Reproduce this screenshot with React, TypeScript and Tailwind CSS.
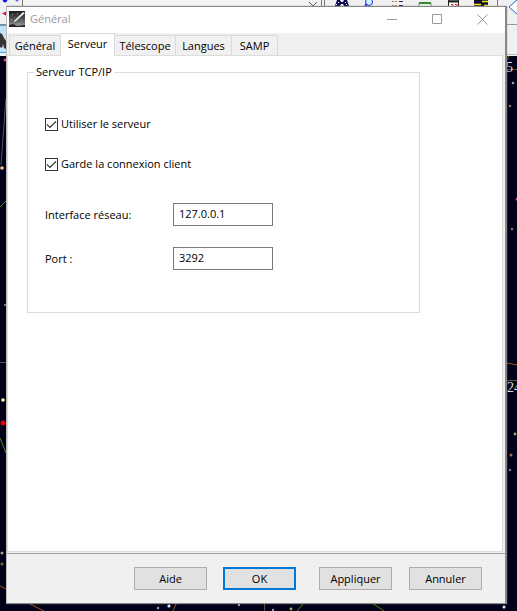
import { useState } from "react";
import type { ReactNode } from "react";

const tabs = ["Général", "Serveur", "Télescope", "Langues", "SAMP"];
const tabWidths = ["w-[52px]", "w-[54px]", "w-[61px]", "w-14", "w-[46px]"];

function Backdrop() {
  return (
    <svg
      aria-hidden="true"
      className="absolute inset-0 h-full w-full"
      viewBox="0 0 517 611"
      preserveAspectRatio="none"
    >
      <rect width="517" height="611" fill="#00001a" />
      <rect width="517" height="56" fill="#f0f0f0" />
      <rect x="23" width="301" height="6" fill="#f4f4f4" />
      <path d="M22.5 0V6" stroke="#777" />
      <circle cx="5" cy="0" r="2.4" fill="#1018ff" />
      <circle cx="17" cy="0" r="1.5" fill="#5060ff" />
      <path d="M2 13.5l4-2v4z" fill="#e80838" />
      <path d="M0 24.5H6" stroke="#888" />
      <rect y="25" width="6" height="28" fill="#c4e2f7" />
      <path d="M0 25.5H6M0 52.5H6" stroke="#4aa0e0" />
      <path d="M0 33l2 1 2 4 2 3v8l-2-1-1-4-1 4-2-1z" fill="#333" />
      <path d="M309 2l4 4 4-4" stroke="#555" fill="none" />
      <path d="M321.500 0V6M324.500 0V6M497.500 0V6" stroke="#777" />
      <path d="M337 0h3l1 2h2l1-2h3l2 6h-5l-1-2h-2l-1 2h-5z" fill="#080850" />
      <path d="M338 2.500h1M336 4.500h1M345 2.500h1M346 4.500h1" stroke="#fff" />
      <circle cx="369" cy="2" r="3.5" fill="#c8f8ff" stroke="#2424e0" />
      <path d="M365 6l2-2" stroke="#2424e0" strokeWidth="2" />
      <path d="M392 1.500h2m1 0h2M392 5.500h2m1 0h2" stroke="#b18b2a" />
      <path d="M399 1.500h4M399 5.500h4" stroke="#272780" />
      <path d="M419 6V3h12v3" fill="#e8f4e8" stroke="#888" />
      <path d="M419 3h12" stroke="#348c28" strokeWidth="2" />
      <path d="M448.500 6V0h10v6" fill="#fff" stroke="#222" />
      <path d="M449 1.500h10" stroke="#222" strokeWidth="2" />
      <path d="M451 4.500h2v2M455 4.500h2v2" fill="none" stroke="#e02020" />
      <rect x="474" width="14" height="6" fill="#101030" />
      <path d="M474 4.500h7M482 1.500h6M484 5.500h4" stroke="#f8e808" strokeWidth="1.5" />
      <path d="M517 0l-8 7 8 7" fill="#fff" stroke="#1769c2" />
      <path d="M507 24.500h10" stroke="#999" />
      <path d="M507 54.500h10" stroke="#bbb" />
      <path d="M6 98L1 165" stroke="#555" fill="none" />
      <path d="M0 207l6-6M0 438l6 15M297 611l7-8M372 603l12 8" stroke="#5c8708" fill="none" />
      <path d="M0 586l6 3M30 604l14 7M507 363l10 2M173 611l4-9M507 60l2-4" stroke="#9c5b12" fill="none" />
      <path d="M0 362.500h6M507 380.500h10M507 69.500h10M264.500 604v7" stroke="#555545" />
      <g fill="#b49794">
        <circle cx="5" cy="60" r="1.5" fill="#d64d78" />
        <circle cx="2" cy="168" r="1.8" fill="#ffc098" />
        <circle cx="5" cy="305" r="1" />
        <circle cx="3" cy="400" r="1.8" fill="#ffff99" />
        <circle cx="3" cy="423" r="2.5" fill="#df0000" />
        <circle cx="2" cy="553" r="1.5" />
        <circle cx="2" cy="564" r="1.5" fill="#687040" />
        <circle cx="513" cy="83" r="1.3" />
        <circle cx="510" cy="106" r="1.3" fill="#98675f" />
        <circle cx="517" cy="199" r="1.5" fill="#d64d78" />
        <circle cx="512" cy="229" r="1.3" fill="#98675f" />
        <circle cx="515" cy="434" r="1.4" fill="#b7a063" />
        <circle cx="511" cy="455" r="1.5" fill="#ad6752" />
        <circle cx="510" cy="470" r="1.3" fill="#6d709c" />
        <circle cx="504" cy="607" r="1.5" fill="#e5ebff" />
        <circle cx="158" cy="608" r="1.2" />
        <circle cx="169" cy="606" r="1.6" fill="#dce4ff" />
        <circle cx="239" cy="605" r="1.2" />
        <circle cx="291" cy="609" r="1.4" fill="#aeb072" />
        <circle cx="273" cy="610" r="1.2" />
      </g>
      <g fill="#ddd" className="font-['Liberation_Serif',serif] text-[14px]">
        <text x="506" y="72">5</text>
        <text x="507" y="392">24</text>
      </g>
    </svg>
  );
}

function Comet() {
  return (
    <svg aria-hidden="true" className="size-4" viewBox="0 0 16 16">
      <defs>
        <linearGradient id="night" x2="0" y2="1">
          <stop stopColor="#1c1c1c" />
          <stop offset=".65" stopColor="#666" />
          <stop offset="1" stopColor="#aaa" />
        </linearGradient>
      </defs>
      <rect width="16" height="16" fill="url(#night)" />
      <path d="M5 10L14 1l2 1-9 8-2 1z" fill="#eee" />
      <path d="M3 3.500h1M8 2.500h1M2 8.500h1M12 9.500h1M9 12.500h1" stroke="#999" />
      <path d="M0 14l4-1 4 2 8-1v2H0z" fill="#222" />
    </svg>
  );
}

function CheckRow({ id, children }: { id: string; children: ReactNode }) {
  return (
    <div className="flex h-4 items-center gap-[3px]">
      <span className="grid size-[13px]">
        <input
          id={id}
          type="checkbox"
          defaultChecked
          className="peer col-start-1 row-start-1 size-[13px] appearance-none border border-[#333] bg-white"
        />
        <svg
          aria-hidden="true"
          className="pointer-events-none invisible col-start-1 row-start-1 size-[13px] peer-checked:visible"
          viewBox="0 0 13 13"
        >
          <path d="M2 6.500l3 3L11 3.500" fill="none" stroke="#333" strokeWidth="1.200" />
        </svg>
      </span>
      <label htmlFor={id}>{children}</label>
    </div>
  );
}

function Field({ id, label, value }: { id: string; label: string; value: string }) {
  return (
    <div className="flex h-[23px] items-center">
      <label htmlFor={id} className="w-32">{label}</label>
      <input
        id={id}
        defaultValue={value}
        className="h-[23px] w-[100px] border border-[#7a7a7a] bg-white px-[5px] pb-0.5 outline-none"
      />
    </div>
  );
}

function ActionButton({ children, primary = false }: { children: ReactNode; primary?: boolean }) {
  return (
    <button
      type="button"
      className={`flex h-[23px] w-[73px] items-center justify-center bg-[#e1e1e1] ${
        primary ? "border-2 border-[#0078d7]" : "border border-[#adadad]"
      }`}
    >
      {children}
    </button>
  );
}

export default function App() {
  const [active, setActive] = useState(1);

  return (
    <div className="relative flex min-h-screen pt-1.5 pr-[11px] pb-[7px] pl-1.5 font-['Open_Sans','Noto_Sans',sans-serif] text-[11px] leading-4 text-black">
      <Backdrop />
      <section
        aria-label="Général"
        className="relative flex min-w-0 flex-1 flex-col border border-[#888] border-l-[#bbb] bg-[#f0f0f0] shadow-[1px_0_1px_#888]"
      >
        <header className="flex h-[26px] items-center bg-white pb-0.5 pl-0.5 text-[#999]">
          <Comet />
          <h1 className="ml-[5px] flex-1">Général</h1>
          <button type="button" aria-label="Réduire" className="grid h-6 w-[45px] place-items-center">
            <svg className="size-[11px]" viewBox="0 0 11 11" stroke="#999"><path d="M0 5.500h10" /></svg>
          </button>
          <button type="button" aria-label="Agrandir" className="grid h-6 w-[45px] place-items-center">
            <svg className="size-[11px]" viewBox="0 0 11 11" fill="none" stroke="#999"><path d="M.5.5h9v9h-9z" /></svg>
          </button>
          <button type="button" aria-label="Fermer" className="grid h-6 w-[45px] place-items-center">
            <svg className="size-[11px]" viewBox="0 0 11 11" stroke="#999"><path d="M.5.5l10 10m0-10l-10 10" /></svg>
          </button>
        </header>

        <div role="tablist" className="flex h-[22px] items-end pl-0.5">
          {tabs.map((tab, i) => (
            <button
              key={tab}
              role="tab"
              type="button"
              aria-selected={i === active}
              onClick={() => setActive(i)}
              className={`flex items-center justify-center whitespace-nowrap border-t border-r border-[#d9d9d9] first:border-l ${tabWidths[i]} ${
                i === active ? "z-10 -mb-px h-[23px] bg-white pb-0.5" : "h-5 bg-[#f0f0f0]"
              }`}
            >
              {tab}
            </button>
          ))}
        </div>

        <main className="mr-0.5 flex-1 border border-[#dcdcdc] bg-white">
          <div className="mr-[82px] ml-[19px] pt-2">
            <fieldset className="h-[249px] min-w-0 border border-[#dcdcdc] px-[17px]">
              <legend className="-ml-[11px] px-0.5">Serveur TCP/IP</legend>
              <div className="flex flex-col gap-6 pt-9">
                <CheckRow id="use-server">Utiliser le serveur</CheckRow>
                <CheckRow id="keep-client">Garde la connexion client</CheckRow>
              </div>
              <div className="flex flex-col gap-[21px] pt-[31px]">
                <Field id="interface" label="Interface réseau:" value="127.0.0.1" />
                <Field id="port" label="Port :" value="3292" />
              </div>
            </fieldset>
          </div>
        </main>

        <footer className="mt-px flex h-[50px] items-center justify-end gap-4 border-t border-[#a0a0a0] pr-[23px]">
          <ActionButton>Aide</ActionButton>
          <ActionButton primary>OK</ActionButton>
          <div className="ml-[7px] flex gap-[17px]">
            <ActionButton>Appliquer</ActionButton>
            <ActionButton>Annuler</ActionButton>
          </div>
        </footer>
      </section>
    </div>
  );
}
